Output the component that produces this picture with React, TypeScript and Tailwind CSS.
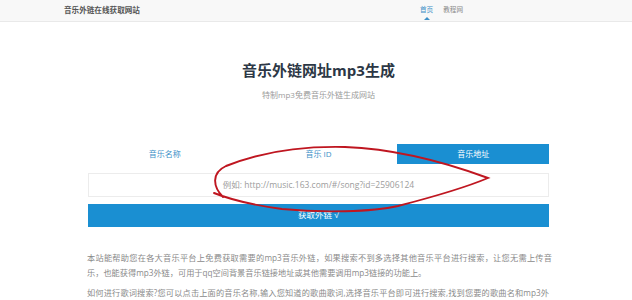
import React from "react";

const font = { fontFamily: '"Open Sans", "Noto Sans CJK SC", sans-serif' };

export default function App() {
  return (
    <div className="relative w-[632px] h-[300px] overflow-hidden bg-white" style={font}>
      <header className="h-[22px] bg-[#f8f8f8] border-b border-[#e9e9e9] flex items-center">
        <div className="ml-[64px] text-[7.6px] font-bold text-[#555] leading-none">音乐外链在线获取网站</div>
        <nav className="ml-auto mr-[169px] flex items-center gap-[10px] text-[6.6px] leading-none">
          <span className="relative text-[#3d8fc7]">
            首页
            <span className="absolute left-1/2 -translate-x-1/2 top-[10px] w-0 h-0 border-l-[3px] border-r-[3px] border-b-[3px] border-l-transparent border-r-transparent border-b-[#3d8fc7]" />
          </span>
          <span className="text-[#888]">教程网</span>
        </nav>
      </header>

      <main className="ml-[88px] w-[461px] pt-[38px]">
        <h1 className="text-center text-[15px] leading-[20px] font-bold text-[#2c3745]">音乐外链网址mp3生成</h1>
        <p className="mt-[9px] text-center text-[8px] leading-[12px] text-[#9a9a9a]">特制mp3免费音乐外链生成网站</p>

        <div className="mt-[43px] grid grid-cols-3 h-[20px] text-[8px]">
          <div className="flex items-center justify-center text-[#3d8fc7]">音乐名称</div>
          <div className="flex items-center justify-center text-[#3d8fc7]">音乐 ID</div>
          <div className="ml-[2px] flex items-center justify-center bg-[#1a8fd2] text-white">音乐地址</div>
        </div>

        <div className="mt-[9px] h-[24px] border border-[#ececec] bg-white flex items-center justify-center">
          <span className="text-[8.5px] text-[#9c9c9c]">例如: http://music.163.com/#/song?id=25906124</span>
        </div>

        <button className="mt-[7px] w-full h-[23px] bg-[#1a8fd2] text-white text-[8.5px] flex items-center justify-center">
          获取外链 √
        </button>

        <div className="mt-[23px] -ml-[1px] w-[465px] text-[8.2px] leading-[15px] text-[#8a8a8a] whitespace-nowrap">
          <div className="text-justify [text-align-last:justify]">
            本站能帮助您在各大音乐平台上免费获取需要的mp3音乐外链，如果搜索不到多选择其他音乐平台进行搜索，让您无需上传音
          </div>
          <div>乐，也能获得mp3外链，可用于qq空间背景音乐链接地址或其他需要调用mp3链接的功能上。</div>
          <div className="mt-[5px] w-[462px] text-justify [text-align-last:justify]">
            如何进行歌词搜索?您可以点击上面的音乐名称,输入您知道的歌曲歌词,选择音乐平台即可进行搜索,找到您要的歌曲名和mp3外
          </div>
        </div>
      </main>

      <svg className="absolute left-0 top-0 pointer-events-none" width="632" height="300" viewBox="0 0 632 300">
        <path
          d="M 223 197 C 213 187, 211 173, 226 166 C 258 153, 300 146, 345 147 C 400 149, 450 164, 488 178 C 462 189, 425 199, 398 206 C 372 212, 322 213, 282 209 C 252 205, 234 201, 214 193"
          fill="none"
          stroke="#bf1620"
          strokeWidth="1.9"
          strokeLinecap="round"
        />
      </svg>
    </div>
  );
}
